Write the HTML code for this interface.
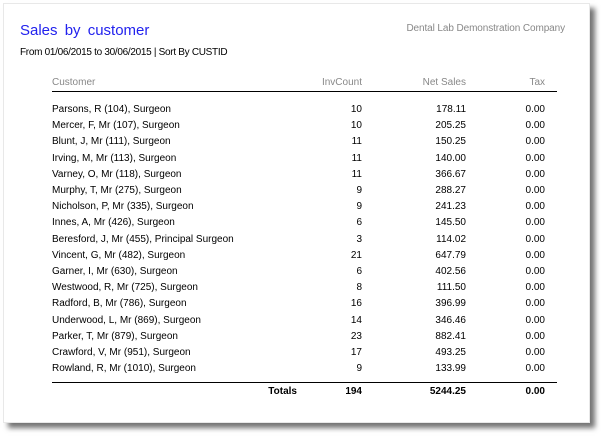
<!DOCTYPE html>
<html><head><style>
body{margin:0;width:601px;height:436px;background:#fff;position:relative;overflow:hidden;font-family:"Liberation Sans",Arial,sans-serif;}
.page{position:absolute;left:3px;top:3px;width:585px;height:418px;background:#fff;box-shadow:5px 5px 5px rgba(0,0,0,0.55);border:1px solid #e8e8e8;}
.t{position:absolute;white-space:nowrap;font-size:10px;color:#000;}
.r{text-align:right;}
.h{color:#888;}
.line{position:absolute;left:52px;width:505px;height:1px;background:#000;}
</style></head><body>
<div class="page"></div>
<div class="t" style="left:20px;top:22px;font-size:15px;color:#2222ee;word-spacing:3px">Sales by customer</div>
<div class="t" style="left:20px;top:47px;letter-spacing:-0.3px">From 01/06/2015 to 30/06/2015 | Sort By CUSTID</div>
<div class="t h" style="right:36px;top:23px;letter-spacing:-0.1px">Dental Lab Demonstration Company</div>
<div class="t h" style="left:52px;top:77px">Customer</div>
<div class="t h r" style="right:239px;top:77px">InvCount</div>
<div class="t h r" style="right:135px;top:77px">Net Sales</div>
<div class="t h r" style="right:56px;top:77px">Tax</div>
<div class="line" style="top:91px"></div>
<div class="line" style="top:382px"></div>
<div class="t r" style="right:304px;top:386px;font-weight:bold">Totals</div>
<div class="t r" style="right:239px;top:386px;font-weight:bold">194</div>
<div class="t r" style="right:135px;top:386px;font-weight:bold">5244.25</div>
<div class="t r" style="right:56px;top:386px;font-weight:bold">0.00</div>
<div class="t" style="left:52px;top:102px;line-height:16.2px">
Parsons, R (104), Surgeon<br>Mercer, F, Mr (107), Surgeon<br>Blunt, J, Mr (111), Surgeon<br>Irving, M, Mr (113), Surgeon<br>Varney, O, Mr (118), Surgeon<br>Murphy, T, Mr (275), Surgeon<br>Nicholson, P, Mr (335), Surgeon<br>Innes, A, Mr (426), Surgeon<br>Beresford, J, Mr (455), Principal Surgeon<br>Vincent, G, Mr (482), Surgeon<br>Garner, I, Mr (630), Surgeon<br>Westwood, R, Mr (725), Surgeon<br>Radford, B, Mr (786), Surgeon<br>Underwood, L, Mr (869), Surgeon<br>Parker, T, Mr (879), Surgeon<br>Crawford, V, Mr (951), Surgeon<br>Rowland, R, Mr (1010), Surgeon</div>
<div class="t r" style="right:239px;top:102px;line-height:16.2px">10<br>10<br>11<br>11<br>11<br>9<br>9<br>6<br>3<br>21<br>6<br>8<br>16<br>14<br>23<br>17<br>9</div>
<div class="t r" style="right:135px;top:102px;line-height:16.2px">178.11<br>205.25<br>150.25<br>140.00<br>366.67<br>288.27<br>241.23<br>145.50<br>114.02<br>647.79<br>402.56<br>111.50<br>396.99<br>346.46<br>882.41<br>493.25<br>133.99</div>
<div class="t r" style="right:56px;top:102px;line-height:16.2px">0.00<br>0.00<br>0.00<br>0.00<br>0.00<br>0.00<br>0.00<br>0.00<br>0.00<br>0.00<br>0.00<br>0.00<br>0.00<br>0.00<br>0.00<br>0.00<br>0.00</div>
</body></html>
